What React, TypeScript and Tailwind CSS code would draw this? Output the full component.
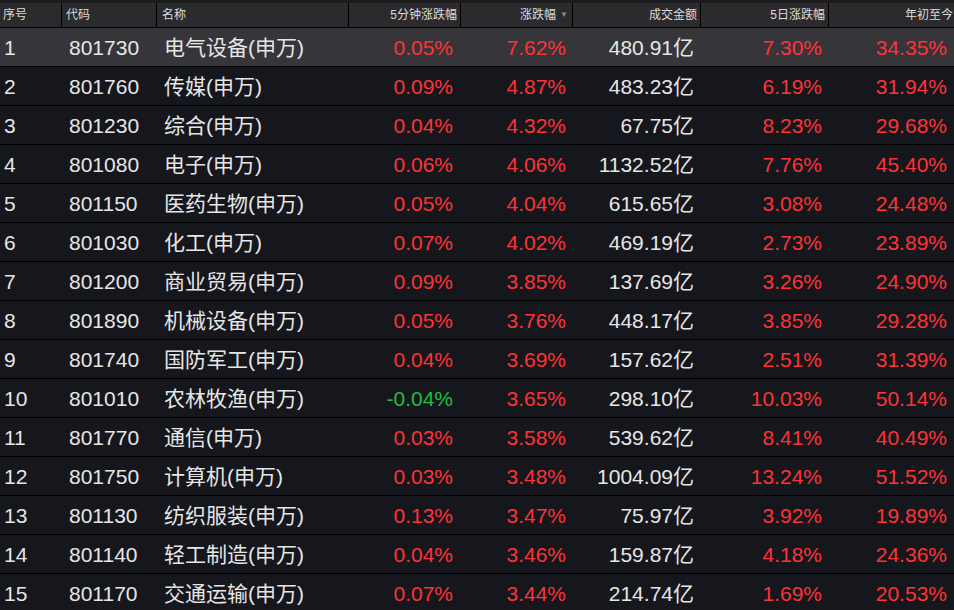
import React from "react";

// ---------------- types ----------------
type Row = {
  code: string;
  name: string;
  min5: string;
  change: string;
  amount: string;
  day5: string;
  ytd: string;
};

// ---------------- data ----------------
const rows: Row[] = [
  { code: "801730", name: "电气设备(申万)", min5: "0.05%", change: "7.62%", amount: "480.91亿", day5: "7.30%", ytd: "34.35%" },
  { code: "801760", name: "传媒(申万)", min5: "0.09%", change: "4.87%", amount: "483.23亿", day5: "6.19%", ytd: "31.94%" },
  { code: "801230", name: "综合(申万)", min5: "0.04%", change: "4.32%", amount: "67.75亿", day5: "8.23%", ytd: "29.68%" },
  { code: "801080", name: "电子(申万)", min5: "0.06%", change: "4.06%", amount: "1132.52亿", day5: "7.76%", ytd: "45.40%" },
  { code: "801150", name: "医药生物(申万)", min5: "0.05%", change: "4.04%", amount: "615.65亿", day5: "3.08%", ytd: "24.48%" },
  { code: "801030", name: "化工(申万)", min5: "0.07%", change: "4.02%", amount: "469.19亿", day5: "2.73%", ytd: "23.89%" },
  { code: "801200", name: "商业贸易(申万)", min5: "0.09%", change: "3.85%", amount: "137.69亿", day5: "3.26%", ytd: "24.90%" },
  { code: "801890", name: "机械设备(申万)", min5: "0.05%", change: "3.76%", amount: "448.17亿", day5: "3.85%", ytd: "29.28%" },
  { code: "801740", name: "国防军工(申万)", min5: "0.04%", change: "3.69%", amount: "157.62亿", day5: "2.51%", ytd: "31.39%" },
  { code: "801010", name: "农林牧渔(申万)", min5: "-0.04%", change: "3.65%", amount: "298.10亿", day5: "10.03%", ytd: "50.14%" },
  { code: "801770", name: "通信(申万)", min5: "0.03%", change: "3.58%", amount: "539.62亿", day5: "8.41%", ytd: "40.49%" },
  { code: "801750", name: "计算机(申万)", min5: "0.03%", change: "3.48%", amount: "1004.09亿", day5: "13.24%", ytd: "51.52%" },
  { code: "801130", name: "纺织服装(申万)", min5: "0.13%", change: "3.47%", amount: "75.97亿", day5: "3.92%", ytd: "19.89%" },
  { code: "801140", name: "轻工制造(申万)", min5: "0.04%", change: "3.46%", amount: "159.87亿", day5: "4.18%", ytd: "24.36%" },
  { code: "801170", name: "交通运输(申万)", min5: "0.07%", change: "3.44%", amount: "214.74亿", day5: "1.69%", ytd: "20.53%" },
];

const cols = "grid grid-cols-[62px_95px_192px_112px_112px_128px_128px_125px]";

const pct = (v: string) => (v.startsWith("-") ? "text-[#1ebe44]" : "text-[#ff3236]");

// ---------------- component ----------------
const App: React.FC = () => {
  return (
    <div
      className="h-[610px] w-[954px] overflow-hidden bg-[#15171c] text-[#e6e6e6]"
      style={{ fontFamily: '"Liberation Sans", "Noto Sans CJK SC", sans-serif' }}
    >
      {/* header */}
      <div className={`${cols} h-[28px] border-t-[3px] border-b border-t-[#1c1c1e] border-b-black bg-[#2b2b2d] text-[12px] leading-none text-[#dcdcdc]`}>
        <div className="flex items-center border-r border-black pl-[3px]">序号</div>
        <div className="flex items-center border-r border-black pl-[4px]">代码</div>
        <div className="flex items-center border-r border-black pl-[5px]">名称</div>
        <div className="flex items-center justify-end border-r border-black pr-[3px]">5分钟涨跌幅</div>
        <div className="flex items-center justify-end border-r border-black pr-[4px]">
          涨跌幅
          <span className="ml-[4px] text-[8px] text-[#8a8a8a]">▼</span>
        </div>
        <div className="flex items-center justify-end border-r border-black pr-[3px]">成交金额</div>
        <div className="flex items-center justify-end border-r border-black pr-[3px]">5日涨跌幅</div>
        <div className="flex items-center justify-end pr-[1px]">年初至今</div>
      </div>

      {/* rows */}
      {rows.map((r, i) => (
        <div
          key={r.code}
          className={`${cols} h-[39px] border-b border-black text-[21px] leading-none ${i === 0 ? "bg-[#36363a]" : "bg-[#15171c]"}`}
        >
          <div className="flex items-center pl-[4px]">{i + 1}</div>
          <div className="flex items-center pl-[7px]">{r.code}</div>
          <div className="flex items-center pl-[7px]">{r.name}</div>
          <div className={`flex items-center justify-end pr-2 ${pct(r.min5)}`}>{r.min5}</div>
          <div className={`flex items-center justify-end pr-[7px] ${pct(r.change)}`}>{r.change}</div>
          <div className="flex items-center justify-end pr-[7px]">{r.amount}</div>
          <div className={`flex items-center justify-end pr-[7px] ${pct(r.day5)}`}>{r.day5}</div>
          <div className={`flex items-center justify-end pr-[7px] ${pct(r.ytd)}`}>{r.ytd}</div>
        </div>
      ))}
    </div>
  );
};

export default App;
